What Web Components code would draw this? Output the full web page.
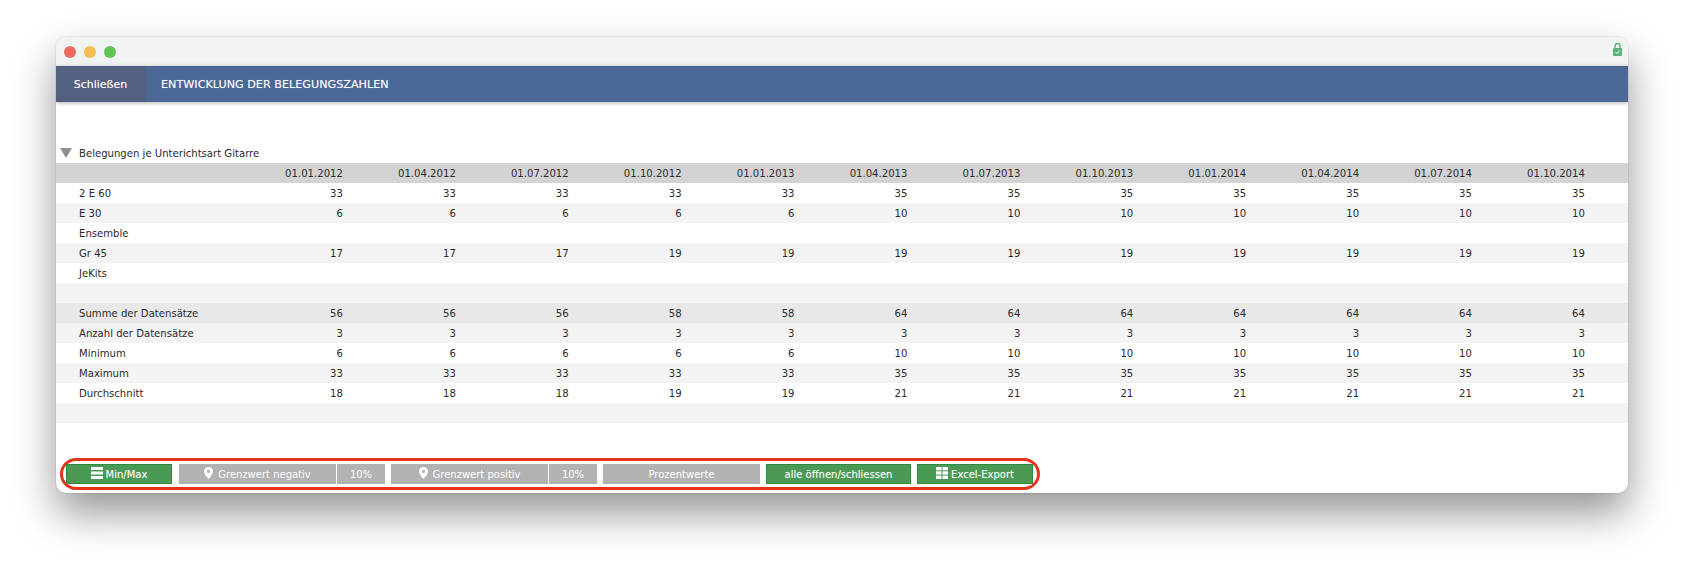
<!DOCTYPE html>
<html lang="de">
<head>
<meta charset="utf-8">
<title>Entwicklung der Belegungszahlen</title>
<style>
  html, body { margin: 0; height: 100%; background: #fff; overflow: hidden; }
  body { font: 10px "DejaVu Sans", Verdana, sans-serif; color: #2a2a2a; }
</style>
</head>
<body>

<app-window>
  <app-header slot="header" close-label="Schließen">ENTWICKLUNG DER BELEGUNGSZAHLEN</app-header>
  <report-table></report-table>
  <tool-bar slot="footer">
    <tool-button color="green" width="106" icon="bars" style="margin-right:1px">Min/Max</tool-button>
    <tool-button color="gray" width="157" icon="pin" join>Grenzwert negativ</tool-button>
    <tool-button color="gray" width="48">10%</tool-button>
    <tool-button color="gray" width="157" icon="pin" join>Grenzwert positiv</tool-button>
    <tool-button color="gray" width="48">10%</tool-button>
    <tool-button color="gray" width="157">Prozentwerte</tool-button>
    <tool-button color="green" width="145">alle öffnen/schliessen</tool-button>
    <tool-button color="green" width="116" icon="grid">Excel-Export</tool-button>
  </tool-bar>
</app-window>

<script>
class AppWindow extends HTMLElement {
  constructor() {
    super();
    this.attachShadow({ mode: 'open' });
    this.shadowRoot.innerHTML = `
      <style>
        :host {
          display: flex;
          flex-direction: column;
          box-sizing: border-box;
          margin: 37px 56px 0;
          height: 456px;
          background: #fff;
          border-radius: 10px;
          box-shadow: 0 0 0 1px rgba(0,0,0,.05), 0 20px 42px rgba(0,0,0,.42);
          overflow: hidden;
        }
        #title {
          flex: none;
          height: 29px;
          display: flex;
          align-items: center;
          justify-content: space-between;
          padding: 1px 6px 0 8px;
          box-sizing: border-box;
          background: #f1f3f2;
        }
        #lights { display: flex; gap: 8px; }
        #lights i { width: 12px; height: 12px; border-radius: 50%; display: block; }
        #main { flex: 1; padding-top: 46px; }
        svg { display: block; margin-top: -6px; }
      </style>
      <div id="title">
        <div id="lights">
          <i style="background:#ee6a5f"></i>
          <i style="background:#f5bd4f"></i>
          <i style="background:#61c454"></i>
        </div>
        <svg width="9" height="13" viewBox="0 0 9 13">
          <path d="M2 6V3a2.500 2.500 0 0 1 5 0V6" fill="none" stroke="#5cb27d" stroke-width="1.500"/>
          <rect x="0" y="5" width="9" height="8" rx="1" fill="#5cb27d"/>
          <path d="M2.600 9.200l1.400 1.400 2.500-3" fill="none" stroke="#fff" stroke-width="1"/>
        </svg>
      </div>
      <slot name="header"></slot>
      <div id="main"><slot></slot></div>
      <slot name="footer"></slot>
    `;
  }
}

class AppHeader extends HTMLElement {
  constructor() {
    super();
    this.attachShadow({ mode: 'open' });
    this.shadowRoot.innerHTML = `
      <style>
        :host {
          display: flex;
          flex: none;
          height: 36px;
          background: #4b6795;
          color: #fff;
          font-size: 11px;
          line-height: 38px;
          text-shadow: 0 0 1px rgba(255,255,255,.35);
          box-shadow: 0 1px 4px rgba(0,0,0,.3);
          position: relative;
        }
        #close { width: 90px; background: #526180; text-align: center; box-sizing: border-box; padding-right: 1px; }
        #label { padding-left: 15px; font-size: 11.200px; }
      </style>
      <div id="close"></div>
      <div id="label"><slot></slot></div>
    `;
    this.shadowRoot.getElementById('close').textContent = this.getAttribute('close-label');
  }
}

const DATES = ['01.01.2012','01.04.2012','01.07.2012','01.10.2012','01.01.2013','01.04.2013',
  '01.07.2013','01.10.2013','01.01.2014','01.04.2014','01.07.2014','01.10.2014'];

const per = (a, b, c) => [a,a,a,b,b,c,c,c,c,c,c,c];
const ROWS = [
  ['2 E 60', per(33,33,35), 'white'],
  ['E 30', per(6,6,10), 'light'],
  ['Ensemble', [], 'white'],
  ['Gr 45', [17,17,17,19,19,19,19,19,19,19,19,19], 'light'],
  ['JeKits', [], 'white'],
  ['', [], 'light'],
  ['Summe der Datensätze', [56,56,56,58,58,64,64,64,64,64,64,64], 'sum'],
  ['Anzahl der Datensätze', per(3,3,3), 'light'],
  ['Minimum', per(6,6,10), 'white'],
  ['Maximum', per(33,33,35), 'light'],
  ['Durchschnitt', [18,18,18,19,19,21,21,21,21,21,21,21], 'white'],
  ['', [], 'light']
];

class ReportTable extends HTMLElement {
  constructor() {
    super();
    this.attachShadow({ mode: 'open' });
    const row = (cls, label, vals) => {
      var cells = '';
      for (var i = 0; i < 12; i++) cells += `<div class="num">${vals[i] === undefined ? '' : vals[i]}</div>`;
      return `<div class="row ${cls}"><div class="label">${label}</div>${cells}</div>`;
    };
    this.shadowRoot.innerHTML = `
      <style>
        :host { display: block; font-size: 10.100px; color: #2a2a2a; }
        #caption { display: flex; align-items: flex-start; height: 15px; line-height: 11px; padding-left: 4px; }
        #caption svg { margin-right: 7px; }
        .row { display: grid; grid-template-columns: 174px repeat(12, 112.910px); box-sizing: border-box; height: 20px; padding-top: 1px; line-height: 20px; }
        .label { padding-left: 23px; white-space: nowrap; }
        .num { text-align: right; }
        .head { background: #d3d3d3; }
        .white { background: #fff; }
        .light { background: #f3f3f3; }
        .sum { background: #e8e8e8; }
      </style>
      <div id="caption">
        <svg width="12" height="10" viewBox="0 0 12 10"><path d="M0 0H12L6 10Z" fill="#8f8f8f"/></svg>
        <span>Belegungen je Unterichtsart Gitarre</span>
      </div>
      ${row('head', '', DATES)}
      ${ROWS.map(r => row(r[2], r[0], r[1])).join('')}
    `;
  }
}

class ToolBar extends HTMLElement {
  constructor() {
    super();
    this.attachShadow({ mode: 'open' });
    this.shadowRoot.innerHTML = `
      <style>
        :host {
          display: flex;
          flex: none;
          align-self: flex-start;
          box-sizing: border-box;
          height: 32px;
          margin: 0 0 3px 4px;
          padding: 3px 4px 3px 3px;
          border: 3px solid #e8331c;
          border-radius: 16px;
          gap: 6px;
        }
      </style>
      <slot></slot>
    `;
  }
}

const ICONS = {
  bars: '<svg width="12" height="12" viewBox="0 0 12 12" fill="#fff"><rect y="0" width="12" height="3"/><rect y="4.500" width="12" height="3"/><rect y="9" width="12" height="3"/></svg>',
  pin: '<svg width="9" height="12" viewBox="0 0 9 12"><path fill="#fff" fill-rule="evenodd" d="M4.500 0A4.500 4.500 0 0 0 0 4.500C0 7 2.500 9.500 4.500 12 6.500 9.500 9 7 9 4.500A4.500 4.500 0 0 0 4.500 0ZM4.500 2.800a1.700 1.700 0 1 1 0 3.400 1.700 1.700 0 0 1 0-3.400Z"/></svg>',
  grid: '<svg width="12" height="12" viewBox="0 0 12 12" fill="#fff"><rect width="5.500" height="3.300"/><rect x="6.500" width="5.500" height="3.300"/><rect y="4.300" width="5.500" height="3.300"/><rect x="6.500" y="4.300" width="5.500" height="3.300"/><rect y="8.600" width="5.500" height="3.400"/><rect x="6.500" y="8.600" width="5.500" height="3.400"/></svg>'
};

class ToolButton extends HTMLElement {
  constructor() {
    super();
    this.attachShadow({ mode: 'open' });
    this.shadowRoot.innerHTML = `
      <style>
        :host {
          display: flex;
          align-items: center;
          justify-content: center;
          gap: 3px;
          box-sizing: border-box;
          height: 20px;
          color: #fff;
          font-size: 10px;
          white-space: nowrap;
          background: #b2b2b2;
        }
        :host([color=green]) { background: #4a9a55; border: 1px solid #2f8a3c; text-shadow: 0 0 1px rgba(255,255,255,.25); }
        :host([join]) { margin-right: -5px; }
        #icon:empty { display: none; }
        #icon { margin-right: 2px; }
        :host([icon=bars]) #icon, :host([icon=grid]) #icon { margin-right: 0; }
      </style>
      <span id="icon"></span><slot></slot>
    `;
  }

  connectedCallback() {
    this.style.width = this.getAttribute('width') + 'px';
    const icon = this.getAttribute('icon');
    if (icon) this.shadowRoot.getElementById('icon').innerHTML = ICONS[icon];
  }
}

customElements.define('app-window', AppWindow);
customElements.define('app-header', AppHeader);
customElements.define('report-table', ReportTable);
customElements.define('tool-bar', ToolBar);
customElements.define('tool-button', ToolButton);
</script>
</body>
</html>
